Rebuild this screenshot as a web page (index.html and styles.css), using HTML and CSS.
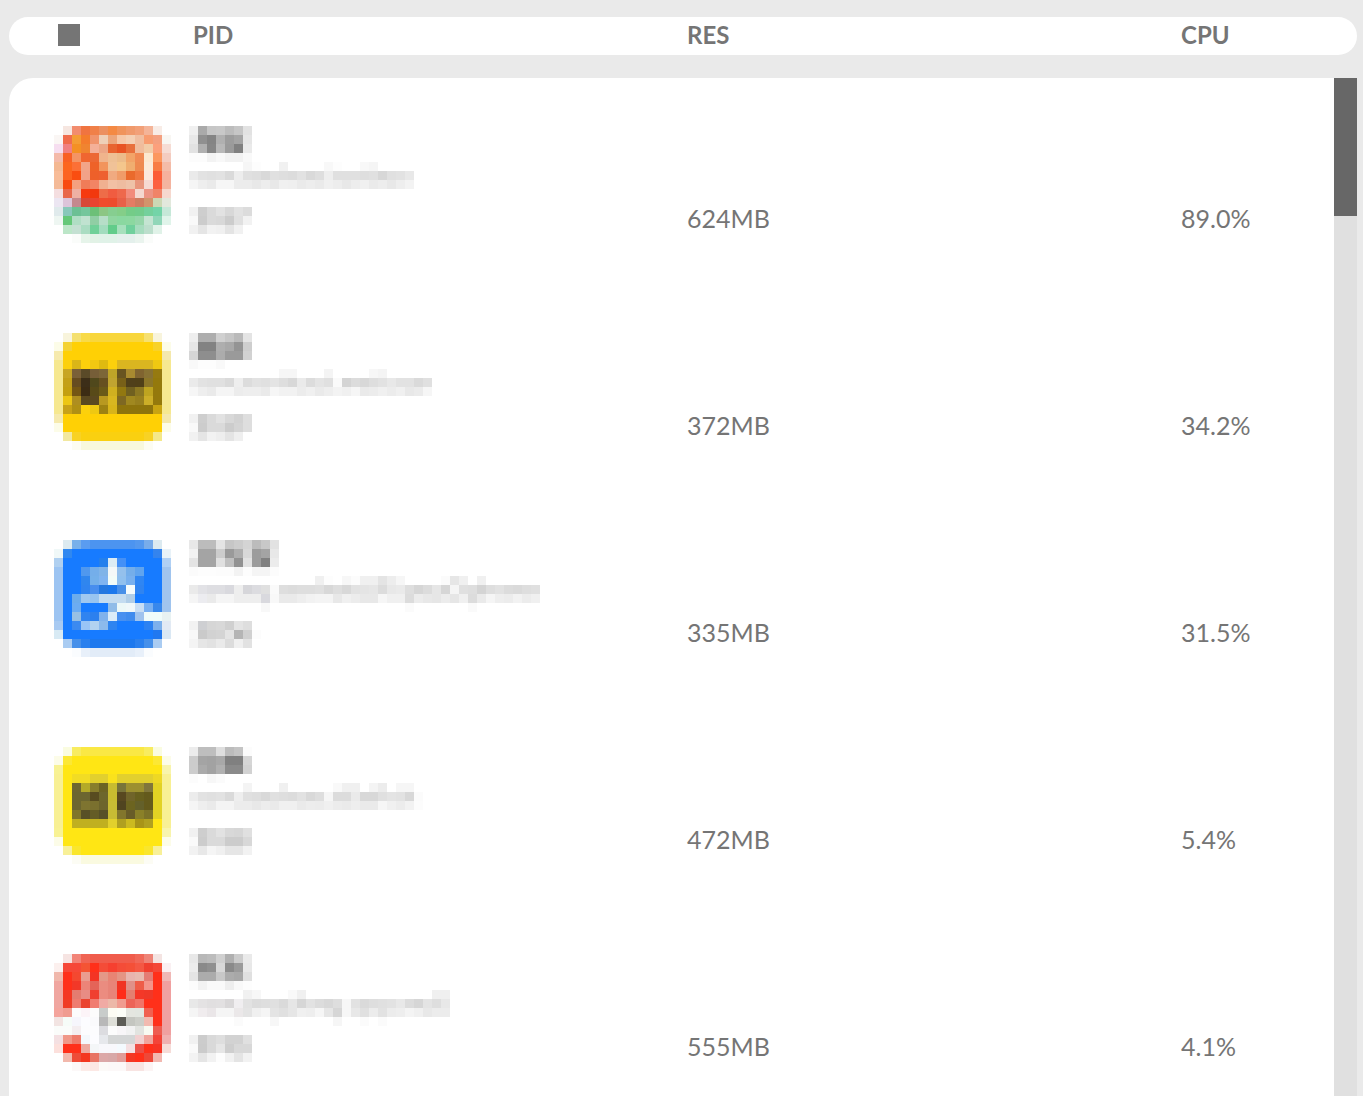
FILE: index.html
```html
<!DOCTYPE html>
<html lang="en">
<head>
    <meta charset="UTF-8">
    <meta name="viewport" content="width=device-width, initial-scale=1.0">
    <title>Processes</title>
    <link rel="stylesheet" href="styles.css">
</head>
<body>

<main class="monitor">
    <table class="processes">
        <thead>
            <tr>
                <th><span class="square"></span></th>
                <th>PID</th>
                <th>RES</th>
                <th>CPU</th>
            </tr>
        </thead>
        <tbody>
            <tr>
                <td class="app"><svg class="mosaic" data-tiles="appOrange"></svg></td>
                <td class="name"><svg class="mosaic" data-tiles="nameOrange"></svg></td>
                <td class="value">624MB</td>
                <td class="value">89.0%</td>
            </tr>
            <tr>
                <td class="app"><svg class="mosaic" data-tiles="appAmber"></svg></td>
                <td class="name"><svg class="mosaic" data-tiles="nameAmber"></svg></td>
                <td class="value">372MB</td>
                <td class="value">34.2%</td>
            </tr>
            <tr>
                <td class="app"><svg class="mosaic" data-tiles="appBlue"></svg></td>
                <td class="name"><svg class="mosaic" data-tiles="nameBlue"></svg></td>
                <td class="value">335MB</td>
                <td class="value">31.5%</td>
            </tr>
            <tr>
                <td class="app"><svg class="mosaic" data-tiles="appYellow"></svg></td>
                <td class="name"><svg class="mosaic" data-tiles="nameYellow"></svg></td>
                <td class="value">472MB</td>
                <td class="value">5.4%</td>
            </tr>
            <tr>
                <td class="app"><svg class="mosaic" data-tiles="appRed"></svg></td>
                <td class="name"><svg class="mosaic" data-tiles="nameRed"></svg></td>
                <td class="value">555MB</td>
                <td class="value">4.1%</td>
            </tr>
        </tbody>
    </table>
</main>

<script src="mosaic.js"></script>

</body>
</html>
```

FILE: styles.css
```css
body {
    font-family: Lato, "Liberation Sans", sans-serif;
    background-color: #eaeaea;
    color: #757575;
    margin: 0;
}
.monitor {
    height: 100vh;
    box-sizing: border-box;
    padding: 17px 6px 0 9px;
    overflow: hidden;
}
.processes,
.processes thead,
.processes tbody {
    display: block;
}
.processes tr {
    display: grid;
    grid-template-columns: 135px 1fr 1fr 180px;
    padding-left: 45px;
}
.processes th,
.processes td {
    padding: 0 0 0 4px;
    text-align: left;
}

/* Column titles */
.processes thead {
    background-color: white;
    border-radius: 19px;
    margin-bottom: 23px;
}
.processes thead tr {
    align-items: center;
    height: 38px;
}
.processes th {
    font-size: 24px;
    font-weight: bold;
    line-height: 36px;
    padding-bottom: 2px;
}
.square {
    display: block;
    width: 22px;
    height: 22px;
    background-color: #757575;
}

/* Process list */
.processes tbody {
    position: relative;
    background-color: white;
    border-radius: 24px 0 0 0;
}
.processes tbody tr {
    align-items: start;
    padding-top: 48px;
    padding-bottom: 42px;
}
.processes td.app,
.processes td.name {
    padding-left: 0;
}
.value {
    margin-top: 78px;
    font-size: 25px;
    line-height: 28px;
}
.mosaic {
    display: block;
    shape-rendering: crispEdges;
}

/* Scrollbar track and thumb */
.processes tbody::before,
.processes tbody::after {
    content: "";
    position: absolute;
    top: 0;
    right: 0;
    width: 23px;
}
.processes tbody::before {
    height: 100%;
    background-color: #e0e0e0;
}
.processes tbody::after {
    height: 138px;
    background-color: #676767;
}
```

FILE: mosaic.js
```js
// Size of one tile in pixels
const TILE = 9;

// Each row is a list of hex colours (two digits = grey).
// "." is the base colour, "-" is empty, "x*n" repeats x n times.
const mosaics = {
    appOrange: { rows: [
        '- f6e6e0 f28c6e f07440 f08048 ec9060 f48a44 f0945c f09a6c f2a078 f4b498 f8ece6 -',
        'faf6f4 f06c4c f49c34 f47c2c f0946c eed0b8 eca67c f6c8a8 f4d0b4 f0bea0 f89c70 f4a080 f8f6f2',
        'f6def0 f08080 f49024 f08430 f4b098 eca686 e86430 e85424 e8703c f0bc9c f2cca8 fca07c f6dcd4',
        'f4baaa f86024 f49464 f06630 ec6834 f0b48c eec094 ecbc8a f2a468 f08a54 fce8d0 fc9860 f4ccc0',
        'f4b892 fc661e fc7036 f2a488 ee6228 f2945c f0c298 f4c68c f0ae70 ee8a50 fcead8 f87c44 f4bca8',
        'f8bc98 fc6420 fa4e10 f2a288 ee602a ee6030 f0aa80 f09c68 ea6a2c f07840 fce8da fc5c34 f6b09c',
        'f4ba98 f84a10 f4a080 f07c58 f28464 f0b090 f2c0a4 eebca0 eec2a8 e8967c f6dad2 fc6040 f4b4a0',
        'f4dee0 e8664a eeb0a4 f63a10 f2380e ee6c48 f05c40 ee684c f28c7c f4d8d0 ec9484 f08468 f6d8ce',
        'ece6f2 dcc4da c4888e d84838 ea4430 f04c2c ee4c2c e86048 e47c64 d07c60 d2946c ccd8b4 e2e8dc',
        'e0eaec 88c8ba 6cc094 74c69c 6cc078 8cc684 86ce90 84ce88 74cc88 72cc8c 74d09c 74d4a8 c6e8d8',
        'eef6f2 64c878 b0dec4 c0e2d0 90cea4 b6dec8 90d6a0 8ad8a0 8cd8a0 96d6aa c4e4d2 90d6b8 e0f4ea',
        '- bce6c8 c4e0d2 aadcc2 70d098 a2dcbe 62cc8a a6e0bc 70d09c a6dcbe bcdecc e0f2e8 -',
        '- - fafcfa e6f4ea e2f2e6 e0f2e8*2 e4f0ec*2 eaf4ee fafcfa - -'
    ] },
    appAmber: { base: 'ffd005', rows: [
        '- f8f4dc f4e070 f8da48 f8d63c*6 f6e070 f8f4dc -',
        'fcfce8 f4d234 .*9 f8d228 fcfce8',
        'f6eaae .*11 f4e8ac',
        'f6e890 fcd00c dab618 fcd00c f2c812 dfba10 fcd00c dab620*4 efc812 f6e890',
        'f6e890 c8a624 7a6038 5a4a28 765e38 7c6638 bea428 685420 a88a30 806430 887234 967a10 f6e890',
        'f6e890 c4a018 664c20 3c2e18 50481c 665020 c0a430 786018 50401a 504018 8c7628 94790c f6e890',
        'f6e890 c4a010 745614 3c2c14 584a18 6a5a18 d0b020 927810 706020 8c7822 bea420 94790c f6e890',
        'f6e890 ecc614 ae8e20 5a4820 5a4820 b89820 d8b620 7e6822 a08820 98801e ccae28 94790c f6e890',
        'f6e890 c8a218 b09014 fcd00c eec812 9e8212 d8b41a 8e740c*4 c8a412 f6e890',
        'f6eaae .*11 f4e8ac',
        'fcfce8 .*11 fcfce8',
        '- f2e8a0 f8d224 fad010*7 f8d224 f4e88a -',
        '- - fcfcf2 f8f8dc*7 fcfcf2 - -'
    ] },
    appBlue: { base: '177bff', rows: [
        '- dceaf0 78b0ea 5a9cf0 4c94f0*5 5498ee 78acea dceaf0 -',
        'f0f8f8 3088f0 .*9 3484ee e8f2f8',
        'b0d0f0 .*4 2480ec dcecf4 4490f6 .*4 b0d0f4',
        '9cc4f2 . . 5098ee 74aeea 80b4e8 f4f8f8 94c0ec 74aeea 60a4ee . . a0c4ee',
        '9cc4f2 . . 3086ee 74b0ea 80b4f0 f2fcf8 90c0ee 78b0ee 3086f2 . . a0c4ee',
        '9cc4f2 . . 3084f0 488eee 2478e0 1c78ec 4890e8 f6fcfc 3084f0 . . a0c4ee',
        '9cc4f2 . 6cacec a0c8f0 98c4f0 c4dcf0*3 b0cee8 . . . a0c4ee',
        '9cc4f2 . 6cacf2 . . . 90bce8 ecf8f8 f0f8fa c8def4 78b0f2 3888ec a0c4ee',
        '9cc4f2 . 98c0e4 3084f0 2c80ee 80b2ec dcecf8 4890f0 408cee a0c4ee f0fcfa f0fcfa e8f2f2',
        'a8caf2 . 3c8af0 98c4f6 b2d2f0 8cbaec 2e84f0 . . . 2c82f2 7cb0ec e2eaf4',
        'd8eaf4 .*10 2078f0 dae8f4',
        '- aaccf2 4690ea 2a80ee 1c78ee*5 2a80ee 4690ea aaccf2 -',
        '- - fafcfe e8f0fa e2ecf8*5 e8f0fa fafcfe - -'
    ] },
    appYellow: { base: 'ffe614', rows: [
        '- fafce0 f8ec60 fae844*7 f8ec60 fafce0 -',
        'fcfce8 fce834 .*9 fce834 fcfce8',
        'f8f294 .*11 f8f4ac',
        'f8f094 . f2dc24 f2dc24 e2d02e e2d02e fae21c e2d02e*4 eed824 f8f094',
        'f8f094 . 6e6630 b4aa28 887e2c 6c6424 c8bc30 78743a 9c9030 9c9030 80763c e2d224 f8f094',
        'f8f094 . 6c6630 6c6630 584c20 6c662c c8bc30 584820 70642a 68601e 645a1c e2d224 f8f094',
        'f8f094 . 6c6630 7e7430 7a702e 6c642c c8bc34 504420 6c6420 64602a 645a1c e2d224 f8f094',
        'f8f094 . 80762a 585026 645c26 565028 c8bc34 82762c 685c28 8a8028 7c7228 e2d224 f8f094',
        'f8f094 . c0b020*4 e2d02c b0a020 ccba20 a89418 b0a020 . f8f094',
        'f8f294 .*11 f8f4ac',
        'fcfce8 .*11 fcfce8',
        '- f8f098 fae62c .*7 fae62c f8f098 -',
        '- - fcfcf4 fafae0*7 fcfcf4 - -'
    ] },
    appRed: { base: 'ff301a', rows: [
        '- f6e4e2 f28478 f06454 f05c4c*5 f06858 ee8478 f4e4e2 -',
        'fcf0ee f64838 f64838 f45434 . f44c38 f64030 f44c38 f45038 f45844 f04030 f44838 faf0f2',
        'f0b8ac . f44830 ea9c90 f43424 e49888 e88474 e49484 e8b4ae e8bab0 e47c74 . f0b8b6',
        'f0a6a0 . f23828 ec8478 e46458 ea8c80 e88478 f03424 e09088 ee5c48 f4948a . f0a0a0',
        'f0a6a0 f43824 e47c70 e88c84 f04030 ec8c80 e88478 ff2c18 e48070 f43828 f03828 . f0a0a0',
        'f0a6a0 f03c24 ee7c70 ea4430 f07c70 f0aaa4 ecb8a8 f09c90 ec6458 f07468 . . f0a0a0',
        'f4a49c f09c90 fcfcfc fcf4f8 fcfcfc c8ccca fcfcf4 fcfef8 e4e6e0 e2e6e0 f06050 . f0a0a0',
        'f2e4e2 f6fcf8 f6f6fc fcfcff fafafc b8b8b8 dedfd8 5c5c56 c4c6c0 cccec8 f2bab0 . f0a0a0',
        'fafcfa fafcfa f4eef0 fcfcfe fcfcfe dcdce0 fcfcfc f8f6f8 f2f2f2 e2e4e0 f8faf2 ee5c50 f0a0a0',
        'f4e0e2 f09888 ee7c6c f4f8fc fcfcff e6e8ec d4d6d6*3 f2d0d0 f0a49c f44438 f0b0b0',
        'fce0dc . . eeaaa0 f4f6f8 f8f8fc*2 f4fafe f4e0e2 ec5048 . f83424 f6dcd8',
        '- f2b8ac ee4c38 f43820 e87464 dca8a8 d8a8a8 e09c98 f43824 . ee4838 f2b8b0 -',
        '- - fcf8f8 fcece8 fce8e4 fcfaf8 fcf8f8*2 f8e4e2*2 fcf4f4 - -'
    ] },
    nameOrange: { rows: [
        'f0 aa c6 c8 bc c6 e2',
        'e8 90 84 b0 9c a4 e6',
        'e2 b0 86 b8 9a 80 ea',
        'fc fc f3 f8 f2 f2 f9',
        '-*6 f6 fd - - f1 -*4 f8 fd - - f8 f5',
        'ea e2 e0 e2 da ed e0 de d9 e0 de dc e2 d9 de ee e0*3 de e0 d7 e0 e2 e8',
        'f5 ee ea f6 f6 ec ec e8 ed e8 f0 ef ea ed ea f0 ed e8 ed f0 ea ed e8 ee f3',
        '-', '-',
        'f1 ce da e2 d8 e2 dc',
        'f9 cc da d8 cc e0 f2',
        'f1 e5 f2 f0 e4 f1'
    ] },
    nameAmber: { rows: [
        'ee ae ae d0 c6 ba e4',
        'e6 82 82 ae a8 94 ce',
        'd6 8e 8e ac 9a 9a d2',
        'f9 fd fd f9 - - -',
        '-*10 f6 f6 -*3 f4 -*4 f7 f4',
        'ea e2 e0 e0 da ee dc e2 e0 e4 de d8 ea dc e4 e0 fa d4 dc d8 de e2 e8 e2 e2 da e0',
        'f6 ee ea f5 f5 ec ee ee ea f6 f2 f2 ec f0 ea ee f3 f0 f6 ea ec f0 ec f0 e8 eb f6',
        '-', '-',
        'f1 ce da e2 d8 d2 de',
        'f9 cc da da cc d4 de',
        'f1 e5 f2 ee e4 ef'
    ] },
    nameBlue: { rows: [
        'e8 bc bc e4 c6 cc d4 bc c8 e2',
        'f2 a4 a4 cc 9a ae d8 9c a4 e8',
        'e4 a4 a4 e0 c0 92 e2 9c 80 ec',
        'fb fd fd fc fc f3 fd f5 f5 fc',
        '-*14 f0 fd - f7 fc f0 f0 e4 ed f6 -*4 fb e6 f0 - f0',
        'ea e2e2e6 dedee2 dedee2 d9d9de ee d6d6da dcdce0 e0 fa de dc de de e0 d8 de d8 e2 e4 e6 dc e8 ea de d6 dc e6 d6 f5 e0 de d4 de e2 dc da de e0',
        'f5 ececf0 ea f5 f5 ee ee ee d9d9de f8 ea ea ee f2 f4 f4 e8 f0 ec e8 e8 f6 f0 f0 dc ec e8 e6 ec e6 f0 dc ea f5 ee ec f2 ec f0',
        '-*8 f8 -*15 fb -*6 fa',
        '-',
        'f2 cecfd2 d6 d8 d0 e4 de',
        'f8 ca d2 d4 e4 b5 d0 fc',
        'f4 e6 e2 ea dc f0 e2'
    ] },
    nameYellow: { rows: [
        'ec be be de bc c4 fc',
        'cc a4 a2 a8 80 80 d6',
        'cc aa a2 b0 8a 8a d2',
        'fc - f7 fb - - -',
        '-*6 f4 -*3 f0 -*5 f9 f0 f0 - f4 ec - f6 f6',
        'ec e2 e0 e2 da ee e0 de d9 e0 de dc e2 d9 de f6 dc dc ea d8 d8 e0 e4 e2 d8 fb',
        'f5 ee ea f4 f4 ec ec e8 ed ea f0 f0 ea ed ec f0 ec ea ee ea ea f6 f0 ec f2 fc',
        '-', '-',
        'f1 ce da e2 d8 d6 e0',
        'fa cc da da cc cc d8',
        'f2 e8 f5 f0 e6 e6 f2'
    ] },
    nameRed: { rows: [
        'e8 b8 bc d0 b0 cc ea',
        'ec 8a 90 d8 8a 9a e8',
        'e4 ac ac c8 ac a8 e0',
        'fc f2 f9 f9 ee f9 fd',
        '-*6 f1 f7 -*3 f9 f0 -*14 f0 f0',
        'e8 e4e2e3 e1dfe0 e2e0e1 d9d7d8 f0eef0 e2 dc de e0 da e6 d6 e2 dc d8 de f7 e2 da de e0 e2 e8 dc d6 e4 de e8',
        'f5 f0ecee eae6e8 f5 f5 ebe8e9 e4 f0 f5 e4 e0 e6 f0 ee f6 e6 d6 f7 e8 e0 ec e2 ec ee f4 f0 e8 ec ec',
        '-*5 fb -*3 f7 -*6 f6 -*2 fb - fb',
        '-',
        'f1 cc d9 de d2 d2 e0',
        'fa cb d9 e6 ce d8 d8',
        'f3 e5 f2 fd f1 e4 f2'
    ] }
};

// Expand a row string into a list of tile values
function readRow(row) {
    return row.split(' ').flatMap(part => {
        const [value, times] = part.split('*');
        return Array(Number(times || 1)).fill(value);
    });
}

function toColor(value, base) {
    if (value === '.') {
        return '#' + base;
    }
    return '#' + (value.length === 2 ? value.repeat(3) : value);
}

document.querySelectorAll('.mosaic').forEach(svg => {
    const mosaic = mosaics[svg.dataset.tiles];
    const rows = mosaic.rows.map(readRow);
    const columns = Math.max(...rows.map(row => row.length));

    svg.setAttribute('width', columns * TILE);
    svg.setAttribute('height', rows.length * TILE);

    rows.forEach((row, y) => {
        row.forEach((value, x) => {
            if (value === '-') {
                return;
            }
            const rect = document.createElementNS('http://www.w3.org/2000/svg', 'rect');
            rect.setAttribute('x', x * TILE);
            rect.setAttribute('y', y * TILE);
            rect.setAttribute('width', TILE);
            rect.setAttribute('height', TILE);
            rect.setAttribute('fill', toColor(value, mosaic.base));
            svg.appendChild(rect);
        });
    });
});
```
